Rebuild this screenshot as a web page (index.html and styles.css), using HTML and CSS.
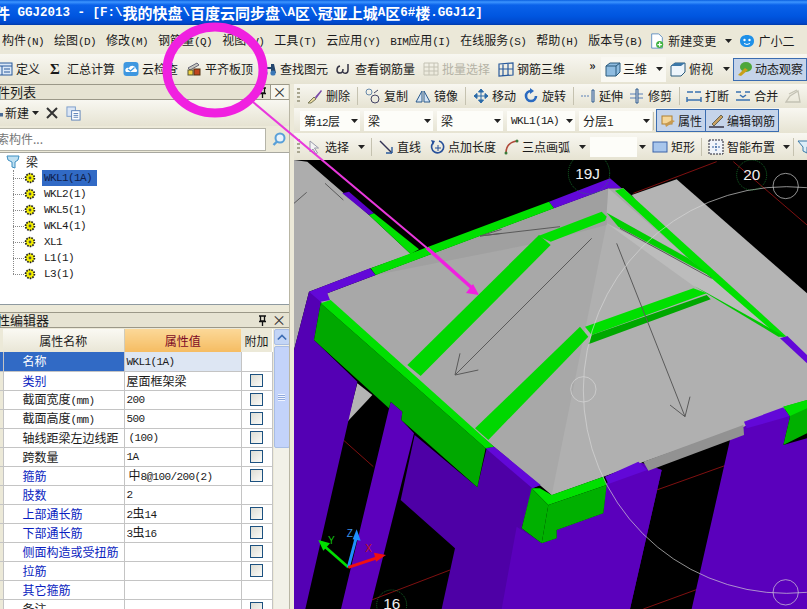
FILE: index.html
```html
<!DOCTYPE html>
<html lang="zh">
<head>
<meta charset="utf-8">
<title>GGJ2013</title>
<link rel="stylesheet" href="styles.css">
</head>
<body>
<svg class="defs" width="0" height="0" aria-hidden="true">
  <symbol id="gear" viewBox="0 0 12 12">
    <circle cx="6" cy="6" r="4.4" fill="#f5f000" stroke="#222" stroke-width="1.8" stroke-dasharray="1.6 1.1"/>
    <circle cx="6" cy="6" r="1.4" fill="#554" />
  </symbol>
  <symbol id="caret" viewBox="0 0 7 4"><path d="M0 0h7L3.5 4z" fill="#222"/></symbol>
  <symbol id="pin" viewBox="0 0 9 11"><path d="M1 1h7M2.500 1v5h4V1M1 6.500h7M4.500 7v4" fill="none" stroke="#111" stroke-width="1.300"/></symbol>
</svg>
<div class="app">
  <header class="titlebar">
    <span class="t-cjk">件</span><span class="t-lat">&nbsp;GGJ2013 - [F:\</span><span class="t-cjk">我的快盘</span><span class="t-lat">\</span><span class="t-cjk">百度云同步盘</span><span class="t-lat">\A</span><span class="t-cjk">区</span><span class="t-lat">\</span><span class="t-cjk">冠亚上城</span><span class="t-lat">A</span><span class="t-cjk">区</span><span class="t-lat">6#</span><span class="t-cjk">楼</span><span class="t-lat">.GGJ12]</span>
  </header>

  <nav class="menubar">
    <span>构件<i class="m">(N)</i></span>
    <span>绘图<i class="m">(D)</i></span>
    <span>修改<i class="m">(M)</i></span>
    <span>钢筋量<i class="m">(Q)</i></span>
    <span>视图<i class="m">(V)</i></span>
    <span>工具<i class="m">(T)</i></span>
    <span>云应用<i class="m">(Y)</i></span>
    <span><i class="m">BIM</i>应用<i class="m">(I)</i></span>
    <span>在线服务<i class="m">(S)</i></span>
    <span>帮助<i class="m">(H)</i></span>
    <span>版本号<i class="m">(B)</i></span>
    <span class="tool menu-new">
      <svg class="ic" viewBox="0 0 16 18"><path d="M2 1h8l4 4v12H2z" fill="#fff" stroke="#5a8cc0"/><circle cx="11" cy="13" r="4" fill="#3fb23f"/><path d="M11 10.500v5M8.500 13h5" stroke="#fff" stroke-width="1.400"/></svg>
      新建变更<svg class="caret"><use href="#caret"/></svg>
    </span>
    <span class="tool menu-bot">
      <svg class="ic" viewBox="0 0 16 16"><path d="M8 2c4 0 7 2 7 6s-3 6-7 6-7-2-7-6 3-6 7-6z" fill="#1e90e8"/><circle cx="5.500" cy="7" r="1.200" fill="#fff"/><circle cx="10.500" cy="7" r="1.200" fill="#fff"/><path d="M5 10.500q3 2 6 0" stroke="#fff" fill="none"/></svg>
      广小二
    </span>
  </nav>

  <div class="toolbar main-tools">
    <span class="tool first">
      <svg class="ic" viewBox="0 0 16 16"><rect x="1" y="2" width="14" height="12" fill="#dbe8f7" stroke="#2a5a9c"/><path d="M1 5h14M5 5v9M7 8h6M7 11h6" stroke="#2a5a9c"/></svg>定义</span>
    <span class="tool"><b class="sigma">Σ</b>汇总计算</span>
    <span class="tool">
      <svg class="ic" viewBox="0 0 16 16"><rect x="0.500" y="1" width="15" height="14" rx="3" fill="#3e97e0"/><path d="M3 11c-2-3 1-5 3-4 1-3 6-3 7 1 2 1 1 3 0 3z" fill="#fff"/><path d="M5 8l2.500 2 4-3.500" stroke="#3e97e0" stroke-width="1.300" fill="none"/></svg>云检查</span>
    <span class="tool">
      <svg class="ic" viewBox="0 0 16 16"><path d="M2 7l9-5 2 2-9 5z" fill="#c9c9c0" stroke="#667"/><rect x="2" y="9" width="5" height="5" fill="#f0d040" stroke="#553"/><rect x="8" y="8" width="6" height="6" fill="#c0441e" stroke="#531"/></svg>平齐板顶</span>
    <span class="tool">
      <svg class="ic" viewBox="0 0 16 16"><path d="M3 3h3v3h4V3h3l2 9H10V8H6v4H1z" fill="#24476e"/><circle cx="4" cy="12" r="2.600" fill="#3a78b8"/><circle cx="12" cy="12" r="2.600" fill="#3a78b8"/></svg>查找图元</span>
    <span class="tool">
      <svg class="ic" viewBox="0 0 16 16"><path d="M4 5c-4 1-4 7 0 7 2 0 3-2 3-4M12 3v6c0 4-4 4-5 2" fill="none" stroke="#334" stroke-width="1.500"/></svg>查看钢筋量</span>
    <span class="tool muted">
      <svg class="ic" viewBox="0 0 16 16"><path d="M1 2h14v12H1zM1 6h14M1 10h14M6 2v12M11 2v12" fill="none" stroke="#c4c2b4"/></svg>批量选择</span>
    <span class="tool">
      <svg class="ic" viewBox="0 0 16 16"><path d="M1 3l14-1v12L1 15zM5 2.700v12M10 2.400v12M1 8h14" fill="none" stroke="#2a5a9c" stroke-width="1.200"/></svg>钢筋三维</span>
    <span class="chev">»</span>
    <span class="view-btn current">
      <svg class="ic" viewBox="0 0 16 16"><path d="M1 5l4-3h10v9l-4 4H1z" fill="#8fbce0" stroke="#2a5a7c"/><path d="M1 5h10v10M11 5l4-3" fill="none" stroke="#2a5a7c"/></svg>三维<svg class="caret"><use href="#caret"/></svg></span>
    <span class="view-btn plain">
      <svg class="ic" viewBox="0 0 16 16"><path d="M1 5l4-3h10v9l-4 4H1z" fill="#eef5fb" stroke="#2a5a7c"/><path d="M1 5l4-3h10l-4 3z" fill="#3c78a8"/></svg>俯视<svg class="caret"><use href="#caret"/></svg></span>
    <span class="view-btn pressed">
      <svg class="ic" viewBox="0 0 16 16"><ellipse cx="9" cy="6" rx="6" ry="5" fill="#4ea63a"/><path d="M1 14l7-7 3 2-7 6z" fill="#c8a018"/></svg>动态观察</span>
  </div>

  <div class="workspace">
    <aside class="side">
      <div class="pane-head">
        <span class="pane-title">构件列表</span>
        <svg class="pin"><use href="#pin"/></svg><span class="close boxed">×</span>
      </div>
      <div class="list-tools">
        <svg class="new-ic" viewBox="0 0 8 16"><rect x="-4" y="8" width="10" height="7" fill="#4a6a96"/></svg>
        <span>新建</span><svg class="caret"><use href="#caret"/></svg>
        <svg class="x-ic" viewBox="0 0 14 14"><path d="M2 2l10 10M12 2L2 12" stroke="#333" stroke-width="2"/></svg>
        <svg class="copy-ic" viewBox="0 0 16 16"><rect x="1" y="1" width="9" height="10" fill="#dbe6f5" stroke="#7a9cc8"/><rect x="6" y="5" width="9" height="10" fill="#fff" stroke="#5a80b8"/><path d="M8 8h5M8 10h5M8 12h5" stroke="#5a80b8"/></svg>
      </div>
      <div class="search-row">
        <div class="search-box">索构件...</div>
        <svg class="search-ic" viewBox="0 0 16 16"><circle cx="9" cy="7" r="4.500" fill="#e8f3fb" stroke="#5aa0d8" stroke-width="2"/><path d="M6 10.500L2.500 14" stroke="#5aa0d8" stroke-width="2.400"/></svg>
      </div>
      <div class="tree">
        <div class="tree-root">
          <svg class="root-ic" viewBox="0 0 14 14"><path d="M1 1h12l-1 4-3 2v6l-3-1V7L2 5z" fill="#bfe0f2" stroke="#3d8ec0"/></svg>梁
        </div>
        <ul class="tree-list">
          <li><svg class="gear"><use href="#gear"/></svg><span class="m node selected">WKL1(1A)</span></li>
          <li><svg class="gear"><use href="#gear"/></svg><span class="m node">WKL2(1)</span></li>
          <li><svg class="gear"><use href="#gear"/></svg><span class="m node">WKL5(1)</span></li>
          <li><svg class="gear"><use href="#gear"/></svg><span class="m node">WKL4(1)</span></li>
          <li><svg class="gear"><use href="#gear"/></svg><span class="m node">XL1</span></li>
          <li><svg class="gear"><use href="#gear"/></svg><span class="m node">L1(1)</span></li>
          <li><svg class="gear"><use href="#gear"/></svg><span class="m node">L3(1)</span></li>
        </ul>
      </div>
      <div class="pane-head second">
        <span class="pane-title">属性编辑器</span>
        <svg class="pin"><use href="#pin"/></svg><span class="close">×</span>
      </div>
      <div class="props">
        <table class="prop-table">
          <colgroup><col class="c0"><col class="c1"><col class="c2"><col class="c3"></colgroup>
          <thead>
            <tr><th class="h-stub"></th><th class="h-name">属性名称</th><th class="h-val">属性值</th><th class="h-add">附加</th></tr>
          </thead>
          <tbody>
            <tr class="active"><td></td><td class="name">名称</td><td class="val"><i class="m">WKL1(1A)</i></td><td></td></tr>
            <tr><td></td><td class="name link">类别</td><td>屋面框架梁</td><td><span class="cb"></span></td></tr>
            <tr><td></td><td class="name">截面宽度<i class="m">(mm)</i></td><td class="m">200</td><td><span class="cb"></span></td></tr>
            <tr><td></td><td class="name">截面高度<i class="m">(mm)</i></td><td class="m">500</td><td><span class="cb"></span></td></tr>
            <tr><td></td><td class="name">轴线距梁左边线距</td><td class="m ind">(100)</td><td><span class="cb"></span></td></tr>
            <tr><td></td><td class="name">跨数量</td><td class="m">1A</td><td><span class="cb"></span></td></tr>
            <tr><td></td><td class="name link">箍筋</td><td class="ind">中<i class="m">8@100/200(2)</i></td><td><span class="cb"></span></td></tr>
            <tr><td></td><td class="name link">肢数</td><td class="m">2</td><td></td></tr>
            <tr><td></td><td class="name link">上部通长筋</td><td><i class="m">2</i>虫<i class="m">14</i></td><td><span class="cb"></span></td></tr>
            <tr><td></td><td class="name link">下部通长筋</td><td><i class="m">3</i>虫<i class="m">16</i></td><td><span class="cb"></span></td></tr>
            <tr><td></td><td class="name link">侧面构造或受扭筋</td><td></td><td><span class="cb"></span></td></tr>
            <tr><td></td><td class="name link">拉筋</td><td></td><td><span class="cb"></span></td></tr>
            <tr><td></td><td class="name link">其它箍筋</td><td></td><td></td></tr>
            <tr><td></td><td class="name">备注</td><td></td><td><span class="cb"></span></td></tr>
          </tbody>
        </table>
        <div class="scrollbar">
          <span class="sb-up"><svg viewBox="0 0 12 8"><path d="M1 7l5-5 5 5" fill="none" stroke="#3c6cb4" stroke-width="2"/></svg></span>
          <span class="sb-thumb"><span class="sb-grip"></span></span>
        </div>
      </div>
    </aside>

    <main class="stage">
      <div class="toolbar edit-tools">
        <span class="grip"></span>
        <span class="tool"><svg class="ic" viewBox="0 0 16 16"><path d="M1 15l6-6 2 2-5 4z" fill="#e8d8a0" stroke="#775"/><path d="M8 9l6-7 1 1-6 8z" fill="#7a4aa8"/></svg>删除</span>
        <span class="sep"></span>
        <span class="tool"><svg class="ic" viewBox="0 0 16 16"><circle cx="4" cy="4" r="3" fill="none" stroke="#6688aa"/><circle cx="10" cy="11" r="4" fill="none" stroke="#446"/><path d="M9 5l4-3" stroke="#446"/></svg>复制</span>
        <span class="tool"><svg class="ic" viewBox="0 0 16 16"><path d="M7 3L1 14h6zM9 3l6 11H9z" fill="#d5e5f5" stroke="#2a5a8c"/></svg>镜像</span>
        <span class="sep"></span>
        <span class="tool"><svg class="ic" viewBox="0 0 16 16"><path d="M8 1l2.500 3h-5zM8 15l2.500-3h-5zM1 8l3-2.500v5zM15 8l-3-2.500v5zM8 3v10M3 8h10" fill="#2a6aa8" stroke="#2a6aa8"/></svg>移动</span>
        <span class="tool"><svg class="ic" viewBox="0 0 16 16"><path d="M8 3a5 5 0 1 0 5 5" fill="none" stroke="#2a6ac0" stroke-width="2.600"/><path d="M7 0l4 3-4 3z" fill="#2a6ac0"/></svg>旋转</span>
        <span class="sep"></span>
        <span class="tool narrow"><svg class="ic" viewBox="0 0 16 16"><path d="M1 8h9" stroke="#5a80b8" stroke-dasharray="2 1"/><path d="M12 2v12h2V2z" fill="#dde" stroke="#2a5a8c"/></svg>延伸</span>
        <span class="tool"><svg class="ic" viewBox="0 0 16 16"><path d="M1 6h13M1 10h13" stroke="#5a80b8"/><path d="M7 1v14h2V1z" fill="#dde" stroke="#2a5a8c"/></svg>修剪</span>
        <span class="sep"></span>
        <span class="tool narrow"><svg class="ic" viewBox="0 0 16 16"><path d="M1 4h6M9 4h6M1 12h14M1 9v5M15 9v5" stroke="#3a72b0" stroke-width="1.500" fill="none"/></svg>打断</span>
        <span class="tool"><svg class="ic" viewBox="0 0 16 16"><path d="M1 12h14M1 4h5M10 4h5M5 7l3 2 3-2" stroke="#3a72b0" stroke-width="1.500" fill="none"/></svg>合并</span>
        <span class="tool"><svg class="ic" viewBox="0 0 16 16"><path d="M1 14h14L13 3 5 8zM4 6l8-4" fill="none" stroke="#c4c2b4" stroke-width="1.300"/></svg></span>
      </div>

      <div class="toolbar combo-tools">
        <span class="combo w1">第<i class="m">12</i>层</span><svg class="caret"><use href="#caret"/></svg>
        <span class="combo w2">梁</span><svg class="caret"><use href="#caret"/></svg>
        <span class="combo w3">梁</span><svg class="caret"><use href="#caret"/></svg>
        <span class="combo w4 m">WKL1(1A)</span><svg class="caret"><use href="#caret"/></svg>
        <span class="combo w5">分层<i class="m">1</i></span><svg class="caret"><use href="#caret"/></svg>
        <span class="sep"></span>
        <span class="pressed-group">
          <span class="pressed-btn"><svg class="ic" viewBox="0 0 16 16"><rect x="2" y="3" width="10" height="8" fill="#f5d79a" stroke="#b08030"/><path d="M6 14l9-6-3-1-7 4z" fill="#c89a50"/></svg>属性</span>
          <span class="pressed-btn"><svg class="ic" viewBox="0 0 16 16"><path d="M3 11l9-9 2 2-9 9z" fill="#c8a060" stroke="#665"/><path d="M0 14h15" stroke="#334" stroke-width="1.500"/></svg>编辑钢筋</span>
        </span>
      </div>

      <div class="toolbar draw-tools">
        <span class="grip"></span>
        <span class="tool tool-sel"><svg class="ic" viewBox="0 0 16 16"><path d="M4 2v11l3-3 3 5 1.500-1-3-5h4z" fill="#f4f4f4" stroke="#99a"/></svg>选择<svg class="caret"><use href="#caret"/></svg></span>
        <span class="sep"></span>
        <span class="tool"><svg class="ic" viewBox="0 0 16 16"><path d="M2 2l12 12" stroke="#335" stroke-width="1.400"/><path d="M14 14V8M14 14H8" stroke="#2a5a9c" stroke-width="1.400"/></svg>直线</span>
        <span class="tool pt-len"><svg class="ic" viewBox="0 0 16 16"><path d="M4 4a6 6 0 1 0 6-2" fill="none" stroke="#27509a" stroke-width="1.600"/><path d="M2 1l4 1-2 4z" fill="#27509a"/><path d="M9 6v6M6 9h6" stroke="#27509a"/></svg>点加长度</span>
        <span class="tool"><svg class="ic" viewBox="0 0 16 16"><path d="M3 14C3 7 7 3 14 2" fill="none" stroke="#b04a3a" stroke-width="1.600"/><circle cx="3" cy="14" r="1.500" fill="#3a7a3a"/><circle cx="14" cy="2" r="1.500" fill="#3a7a3a"/></svg>三点画弧<svg class="caret"><use href="#caret"/></svg></span>
        <span class="combo w6"></span><svg class="caret"><use href="#caret"/></svg>
        <span class="tool"><svg class="ic" viewBox="0 0 16 16"><rect x="1" y="3" width="14" height="10" fill="#a8c6ec" stroke="#3a62a8"/></svg>矩形</span>
        <span class="sep"></span>
        <span class="tool smart"><svg class="ic" viewBox="0 0 16 16"><rect x="1" y="1" width="14" height="14" fill="#f0f4fa" stroke="#223" stroke-dasharray="2 1"/><path d="M8 4v8M4 8h8" stroke="#2a5a9c" stroke-dasharray="2 1"/></svg>智能布置<svg class="caret"><use href="#caret"/></svg></span>
        <span class="sep"></span>
        <svg class="ic filter" viewBox="0 0 16 16"><path d="M1 2h14l-5 6v6l-4-2V8z" fill="#dceef8" stroke="#3a78a8"/></svg>
      </div>

      <div class="canvas">
        <svg class="scene" viewBox="12 0 1539 1347" preserveAspectRatio="none">
          <g fill="none" stroke="#c01818" stroke-width="2">
            <path d="M1030 100L1280 5M1330 5L1551 195M1100 990L1310 915M245 1320L480 1230M1060 1347L1230 1285M160 840L250 920M1480 1200L1551 1165"/>
          </g>
          <!-- slabs behind the roof -->
          <polygon points="12,0 52,5 237,165 362,282 242,325 57,395 12,570" fill="#adadad"/>
          <polygon points="1160,58 1551,400 1551,740 1025,105" fill="#b4b4b4"/>
          <polygon points="157,100 177,95 252,160 237,165" fill="#5a00c8"/>
          <polygon points="237,165 252,160 387,268 362,282" fill="#00e000"/>
          <polygon points="202,670 247,705 172,785" fill="#b4b4b4"/>
          <!-- columns -->
          <polygon points="12,570 57,395 120,420 92,430 72,540 202,665 46,1347 12,1347" fill="#5400b4"/>
          <polygon points="302,725 337,755 334,780 372,820 240,1347 153,1347" fill="#5c00bc"/>
          <polygon points="374,825 562,982 590,865 612,860 752,975 727,985 695,1105 755,1150 800,1135 800,1110 940,1060 950,970 1045,905 1115,930 1020,1347 455,1347 495,1165 332,1020" fill="#4e00a6"/>
          <polygon points="680,1100 755,1150 800,1135 800,1110 940,1060 950,970 1045,905 1115,930 1020,1347 635,1347" fill="#5a00bc"/>
          <polygon points="1360,785 1480,745 1500,770 1480,855 1551,835 1551,1347 1205,1347 1320,840 1360,800" fill="#5a00bc"/>
          <!-- roof base, then faces -->
          <polygon points="92,425 112,400 257,345 792,145 955,85 1000,85 1490,530 1551,610 1551,720 1360,800 1060,905 785,1005 612,860" fill="#a8a8a8"/>
          <polygon points="950,190 785,1005 940,950 1060,905 1360,800 1551,720 1551,610 1480,530 1250,345" fill="#b0b0b0"/>
          <polygon points="257,345 792,145 955,85 950,195 747,248" fill="#a0a0a0"/>
          <polygon points="955,85 1190,290 950,160" fill="#b6b6b6"/>
          <polygon points="950,190 1265,350 1480,535 1220,385" fill="#bcbcbc"/>
          <polygon points="1060,905 1360,795 1362,825 1075,932" fill="#929292"/>
          <!-- purple caps -->
          <polygon points="57,395 240,325 257,345 112,400 120,420 92,425" fill="#6208d8"/>
          <polygon points="777,125 960,55 995,85 955,85 792,145" fill="#6208d8"/>
          <polygon points="1470,535 1492,528 1551,585 1551,610" fill="#6208d8"/>
          <polygon points="612,860 752,975 727,985 587,865" fill="#6208d8"/>
          <polygon points="945,950 1045,905 1072,930 955,972" fill="#6208d8"/>
          <polygon points="1362,785 1480,742 1500,768 1370,805" fill="#6208d8"/>
          <!-- green beams -->
          <polygon points="242,325 777,125 792,145 257,345" fill="#00e000"/>
          <polygon points="975,92 1000,85 1490,530 1465,528 1190,290" fill="#00e000"/>
          <polygon points="950,158 1195,295 1265,350 985,200" fill="#00d000"/>
          <polygon points="1212,378 1250,398 1485,530 1465,530" fill="#00c800"/>
          <polygon points="745,228 935,155 950,170 945,182 782,245" fill="#00e000"/>
          <polygon points="747,225 782,255 392,648 352,615" fill="#00d800"/>
          <polygon points="870,500 895,530 595,840 555,805" fill="#00d800"/>
          <polygon points="885,500 1210,385 1250,400 905,525" fill="#00e000"/>
          <polygon points="905,525 1250,405 1262,418 895,553" fill="#00a800"/>
          <polygon points="92,430 587,865 562,982 334,780 337,755 302,725 297,745 72,540" fill="#00a800"/>
          <polygon points="122,420 612,860 587,865 92,430" fill="#00e000"/>
          <polygon points="725,985 750,985 785,1005 940,950 950,975 775,1035" fill="#00e000"/>
          <polygon points="725,985 775,1035 755,1150 695,1105" fill="#00b000"/>
          <polygon points="775,1035 950,975 940,1060 800,1110 800,1135 755,1150" fill="#00b000"/>
          <polygon points="1480,740 1551,720 1551,820 1480,855 1500,770" fill="#00b000"/>
          <polygon points="1480,740 1551,720 1551,745 1500,768" fill="#00e000"/>
          <!-- load arrows -->
          <g fill="none" stroke="#5a5a5a" stroke-width="3">
            <path d="M905 235L495 645M510 580L495 645L565 630"/>
            <path d="M980 250L1185 770M1140 735L1185 770L1200 710"/>
            <path d="M810 200L570 228M635 208L570 228L635 220"/>
            <path d="M990 205L1265 355M105 70L160 120M12 130L50 97"/>
          </g>
          <!-- orbit guides -->
          <g fill="none" stroke="#d8d8d8" stroke-width="2">
            <circle cx="1490" cy="690" r="610"/>
            <circle cx="880" cy="688" r="38"/>
            <circle cx="1487" cy="78" r="38"/>
            <circle cx="1487" cy="1297" r="38"/>
          </g>
          <!-- axis bubbles -->
          <g fill="none" stroke="#1f9a3a" stroke-width="2" stroke-dasharray="3 3">
            <circle cx="897" cy="40" r="62"/>
            <circle cx="1385" cy="45" r="45"/>
            <circle cx="305" cy="1335" r="45"/>
          </g>
          <g class="bubble-text">
            <text x="893" y="58">19J</text>
            <text x="1385" y="60">20</text>
            <text x="305" y="1347">16</text>
          </g>
          <!-- axis gizmo -->
          <path d="M175 1222L105 1160" stroke="#00e000" stroke-width="8"/>
          <polygon points="85,1140 120,1150 100,1172" fill="#00e000"/>
          <path d="M175 1222L198 1135" stroke="#1e90ff" stroke-width="9"/>
          <polygon points="200,1108 212,1142 188,1138" fill="#1e90ff"/>
          <path d="M175 1222L265 1192" stroke="#f01010" stroke-width="9"/>
          <polygon points="288,1185 258,1205 252,1178" fill="#f01010"/>
          <g class="gizmo-text">
            <text x="114" y="1152" fill="#10c010">Y</text>
            <text x="170" y="1130" fill="#3a90e8">Z</text>
            <text x="226" y="1175" fill="#c01818">X</text>
          </g>
        </svg>
      </div>
    </main>
  </div>

  <svg class="annotation" viewBox="0 0 807 609">
    <ellipse cx="215" cy="70" rx="48" ry="43" fill="none" stroke="#f020e0" stroke-width="9"/>
    <path d="M253 102L427 248" stroke="#e838dc" stroke-width="2" fill="none"/>
    <path d="M427 248L472 288" stroke="#f020e0" stroke-width="3.500" fill="none"/>
    <polygon points="479,295 466,293 473,284" fill="#f020e0"/>
  </svg>
</div>
</body>
</html>
```
FILE: styles.css
```css
* { box-sizing: border-box; }
html, body { margin: 0; padding: 0; }
body {
  width: 807px;
  height: 609px;
  overflow: hidden;
  font-family: "Noto Sans CJK SC", "Liberation Sans", sans-serif;
  font-size: 12px;
  line-height: 14px;
  color: #1a1a1a;
  background: #ece9d8;
}
.defs { position: absolute; }
.app {
  position: relative;
  width: 807px;
  height: 609px;
  overflow: hidden;
  display: flex;
  flex-direction: column;
  background: #ece9d8;
}
.m, i.m {
  font-family: "Liberation Mono", "Noto Sans CJK SC", monospace;
  font-size: 11px;
  letter-spacing: -0.6px;
  font-style: normal;
}

/* title bar */
.titlebar {
  height: 25px;
  flex: none;
  display: flex;
  align-items: center;
  white-space: pre;
  color: #fff;
  font-weight: 700;
  margin-left: -5px;
  background: linear-gradient(#0a5fe0 0, #3d95ff 2px, #0a62ea 5px, #0056e0 16px, #0048cc 23px, #003aa8 25px);
}
.t-cjk { font-size: 15px; }
.t-lat { font-family: "Liberation Mono", monospace; font-size: 12.5px; }

/* menu */
.menubar {
  height: 29px;
  flex: none;
  display: flex;
  align-items: center;
  gap: 10px;
  padding: 2px 0 0 2px;
  white-space: nowrap;
  background: #ebe8d8;
}
.menu-new { margin-left: -3px; }
.menu-bot { margin-left: -3px; }

/* toolbars */
.toolbar {
  display: flex;
  align-items: center;
  white-space: nowrap;
  background: linear-gradient(#f8f7f1, #e6e3d2);
}
.tool { display: inline-flex; align-items: center; gap: 3px; }
.ic { width: 16px; height: 16px; flex: none; }
.caret { width: 7px; height: 4px; flex: none; margin-left: 6px; }
.sep { width: 1px; height: 18px; background: #c5c2b0; flex: none; }
.grip {
  width: 3px;
  height: 16px;
  flex: none;
  background: repeating-linear-gradient(#a9a690 0 2px, transparent 2px 4px);
}
.muted { color: #b5b3a6; }

.main-tools {
  height: 30px;
  flex: none;
  gap: 8px;
}
.main-tools .first { margin-left: -3px; }
.sigma { font: 700 15px "Liberation Serif", serif; width: 14px; text-align: center; margin-right: 2px; }
.chev { font-weight: 700; margin: -8px 0 0 16px; width: 8px; }
.view-btn { display: inline-flex; align-items: center; gap: 3px; height: 25px; }
.view-btn .caret { margin-left: 7px; }
.view-btn.current { background: #f9f8f2; padding: 0 3px 0 4px; margin-left: -4px; gap: 2px; }
.view-btn.plain { margin-left: -4px; }
.view-btn.pressed { background: #c5d4ea; border: 1px solid #3a6cb0; height: 23px; margin-left: -5px; padding: 0 3px; gap: 2px; }

/* workspace */
.workspace { flex: 1; min-height: 0; display: flex; gap: 4px; }
.side {
  width: 290px;
  flex: none;
  display: flex;
  flex-direction: column;
  border-right: 1px solid #b9b6a4;
}
.pane-head {
  height: 16px;
  flex: none;
  display: flex;
  align-items: center;
  background: #e6e3d2;
  border: 1px solid #9b9888;
  border-width: 1px 0 1px 0;
  overflow: hidden;
}
.pane-head.second { margin-top: 7px; }
.pane-title { flex: 1; margin-left: -16px; font-size: 13px; line-height: 14px; white-space: nowrap; }
.pin { width: 9px; height: 11px; flex: none; margin-right: 3px; }
.close { width: 18px; height: 14px; font-size: 14px; line-height: 12px; text-align: center; color: #333; margin-right: 1px; }
.close.boxed { background: #f7f6ee; border: 1px solid #9b9888; border-width: 0 0 0 1px; }

.list-tools {
  height: 26px;
  flex: none;
  display: flex;
  align-items: center;
  background: linear-gradient(#f8f7f1, #e6e3d2);
}
.list-tools span { font-size: 12px; margin-left: 1px; }
.new-ic { width: 4px; height: 16px; flex: none; }
.list-tools .caret { margin-left: 3px; }
.x-ic { width: 14px; height: 14px; margin-left: 6px; flex: none; }
.copy-ic { width: 15px; height: 15px; margin-left: 7px; flex: none; }

.search-row {
  height: 26px;
  flex: none;
  display: flex;
  align-items: center;
  background: #ece9d8;
  gap: 5px;
}
.search-box {
  width: 266px;
  height: 23px;
  background: #fff;
  border: 1px solid #b5b4a8;
  border-left: 0;
  line-height: 20px;
  color: #777;
  text-indent: -3px;
  overflow: hidden;
}
.search-ic { width: 16px; height: 16px; flex: none; }

.tree {
  height: 153px;
  flex: none;
  background: #fff;
  border-bottom: 1px solid #8f9aa0;
  border-top: 1px solid #a8a8a0;
  padding-top: 1px;
}
.tree-root { display: flex; align-items: center; gap: 6px; height: 16px; padding-left: 6px; font-size: 12px; }
.root-ic { width: 14px; height: 14px; flex: none; }
.tree-list { list-style: none; margin: 0; padding: 0 0 0 13px; position: relative; }
.tree-list::before {
  content: "";
  position: absolute;
  left: 13px;
  top: 0;
  height: 104px;
  border-left: 1px dotted #888;
}
.tree-list li { display: flex; align-items: center; height: 16px; }
.tree-list li::before { content: ""; width: 11px; border-top: 1px dotted #888; flex: none; }
.gear { width: 12px; height: 12px; flex: none; margin-right: 7px; }
.node { height: 16px; line-height: 16px; padding: 0 1px; }
.node.selected { background: #316ac5; color: #10204a; width: 55px; margin-left: -1px; padding-left: 2px; }

.props { flex: 1; min-height: 0; display: flex; overflow: hidden; margin-top: 1px; }
.prop-table {
  width: 272px;
  height: max-content;
  flex: none;
  table-layout: fixed;
  border-collapse: collapse;
  background: #fff;
}
.c0 { width: 3px; }
.c1 { width: 121px; }
.c2 { width: 117px; }
.c3 { width: 31px; }
.prop-table th { height: 23px; padding: 0; font-weight: 400; text-align: center; font-size: 12px; }
.h-stub { background: #ece9d8; }
.h-name { background: linear-gradient(#faf9f3, #e9e6d6); border-right: 1px solid #cfccbc; }
.h-val { background: linear-gradient(#fbd898, #f5bc62); color: #7c0a26; }
.h-add { background: #ece9d8; }
.prop-table tbody tr { height: 19px; }
.prop-table td {
  height: 19px;
  padding: 0 3px;
  border: 1px solid #c4c4c4;
  border-width: 0 1px 1px 0;
  white-space: nowrap;
  overflow: hidden;
  line-height: 12px;
  vertical-align: middle;
}
.prop-table td:first-child { background: #ece9d8; padding: 0; }
.prop-table td:nth-child(2) { padding-left: 19px; padding-right: 0; }
.prop-table td:nth-child(3) { padding-left: 2px; }
.prop-table td.ind { padding-left: 4px; }
.prop-table td:last-child { text-align: center; padding: 0; }
.link { color: #0a1ec0; }
.active td.name { background: #316ac5; color: #fff; }
.active td.val { background: #dde6f3; }
.active td:first-child { background: #316ac5; }
.cb {
  display: block;
  width: 13px;
  height: 13px;
  margin: 0 auto;
  border: 1px solid #1c5180;
  background: linear-gradient(135deg, #dcdcd4, #fbfbf8);
}
.scrollbar {
  width: 16px;
  flex: none;
  margin-left: 1px;
  display: flex;
  flex-direction: column;
  gap: 1px;
  background: #f2f1e8;
}
.sb-up {
  height: 16px;
  flex: none;
  background: #c3d5f6;
  border: 1px solid #a8bde4;
  border-radius: 2px;
  display: flex;
  align-items: center;
  justify-content: center;
}
.sb-up svg { width: 10px; height: 8px; }
.sb-thumb {
  height: 102px;
  flex: none;
  background: #c3d3fa;
  border: 1px solid #a8bde4;
  border-radius: 2px;
  display: flex;
  align-items: center;
  justify-content: center;
}
.sb-grip {
  width: 7px;
  height: 7px;
  background: repeating-linear-gradient(#f0f4ff 0 1px, #8ea8dc 1px 2px);
}

/* stage */
.stage { flex: 1; min-width: 0; display: flex; flex-direction: column; }
.edit-tools { height: 24px; flex: none; padding-left: 3px; gap: 7px; }
.edit-tools .narrow { margin-right: -1px; }
.edit-tools .sep + .narrow { margin-left: -1px; }
.combo-tools { height: 25px; flex: none; padding-left: 6px; }
.combo-tools .caret { margin: 0 6px 0 -12px; }
.combo { height: 20px; background: #fdfdf9; line-height: 20px; padding-left: 4px; flex: none; margin-right: 3px; }
.w1 { width: 60px; }
.w2 { width: 69px; }
.w3 { width: 66px; }
.w4 { width: 68px; }
.w5 { width: 73px; }
.w6 { width: 47px; }
.combo-tools .sep { margin: 0 2px 0 -3px; }
.pressed-group { display: flex; }
.pressed-btn {
  height: 23px;
  display: inline-flex;
  align-items: center;
  gap: 2px;
  padding: 0 3px;
  background: #c5d4ea;
  border: 1px solid #3a6cb0;
}
.pressed-btn + .pressed-btn { margin-left: -1px; }
.draw-tools { height: 27px; flex: none; padding-left: 3px; gap: 6px; }
.pt-len { margin-left: 2px; }
.pt-len + .tool { margin-left: 1px; }
.draw-tools .combo { margin-left: -2px; margin-right: -10px; }
.smart .caret { margin-left: 5px; }
.draw-tools .smart + .sep { margin-left: -3px; }
.filter { margin-left: -3px; }

.canvas { flex: 1; min-height: 0; background: #000; overflow: hidden; }
.scene { display: block; width: 513px; height: 449px; }
.bubble-text text {
  fill: #f0f0f0;
  font-family: "Liberation Sans", sans-serif;
  font-size: 46px;
  text-anchor: middle;
}
.gizmo-text text {
  font-family: "Liberation Sans", sans-serif;
  font-size: 30px;
}

/* annotation drawn over everything */
.annotation {
  position: absolute;
  left: 0;
  top: 0;
  width: 807px;
  height: 609px;
  pointer-events: none;
}
```
